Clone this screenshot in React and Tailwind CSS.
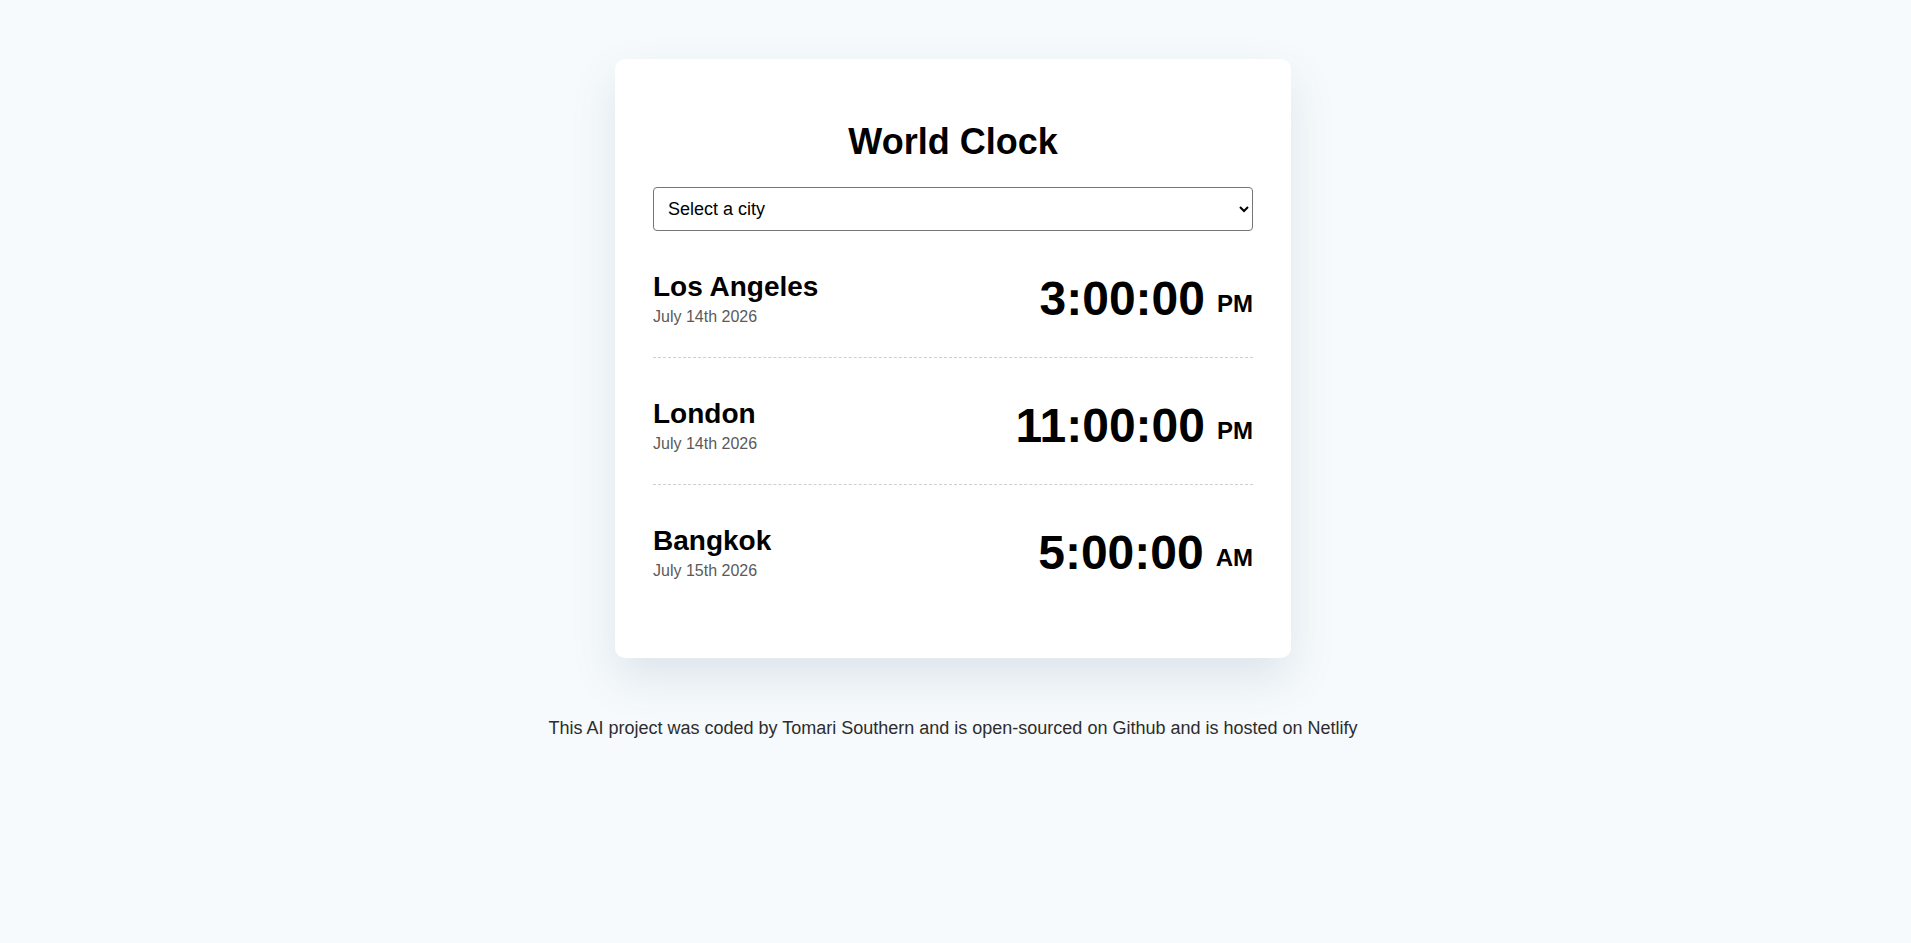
import React from "react";

const cities = [
  { name: "Los Angeles", date: "July 14th 2026", time: "3:00:00", ampm: "PM" },
  { name: "London", date: "July 14th 2026", time: "11:00:00", ampm: "PM" },
  { name: "Bangkok", date: "July 15th 2026", time: "5:00:00", ampm: "AM" },
];

export default function App() {
  return (
    <div className="min-h-screen bg-[#f6fafc] font-['Liberation_Sans',Arial,sans-serif] text-black pr-[5px]">
      <div className="flex flex-col items-center pt-[59px]">
        <div className="w-[676px] bg-white rounded-[10px] px-[38px] pt-[62px] pb-[47px] shadow-[0_20px_45px_rgba(60,90,120,0.13)]">
          <h1 className="text-center text-[36px] leading-[41px] font-bold mb-[25px]">World Clock</h1>
          <select className="w-full h-[44px] border border-[#767676] rounded-[4px] bg-white text-[18px] px-[10px] text-black">
            <option>Select a city</option>
            <option>Sydney</option>
            <option>Tokyo</option>
            <option>Paris</option>
          </select>
          <div>
            {cities.map((c, i) => (
              <div
                key={c.name}
                className={
                  i < cities.length - 1
                    ? "flex items-center justify-between pt-[40px] pb-[31px] border-b border-dashed border-[#cfcfcf]"
                    : "flex items-center justify-between pt-[40px] pb-[31px]"
                }
              >
                <div>
                  <div className="text-[28px] leading-[32px] font-bold">{c.name}</div>
                  <div className="text-[16px] leading-[18px] mt-[5px] text-[#5a5a5a]">{c.date}</div>
                </div>
                <div className="text-[48px] leading-[55px] font-bold whitespace-nowrap">
                  <span>{c.time}</span>
                  <span className="text-[24px] leading-none align-[3px] ml-[12px]">{c.ampm}</span>
                </div>
              </div>
            ))}
          </div>
        </div>
        <p className="mt-[60px] text-[18px] leading-[21px] text-[#2d2d2d]">
          This AI project was coded by Tomari Southern and is open-sourced on Github and is hosted on Netlify
        </p>
      </div>
    </div>
  );
}
